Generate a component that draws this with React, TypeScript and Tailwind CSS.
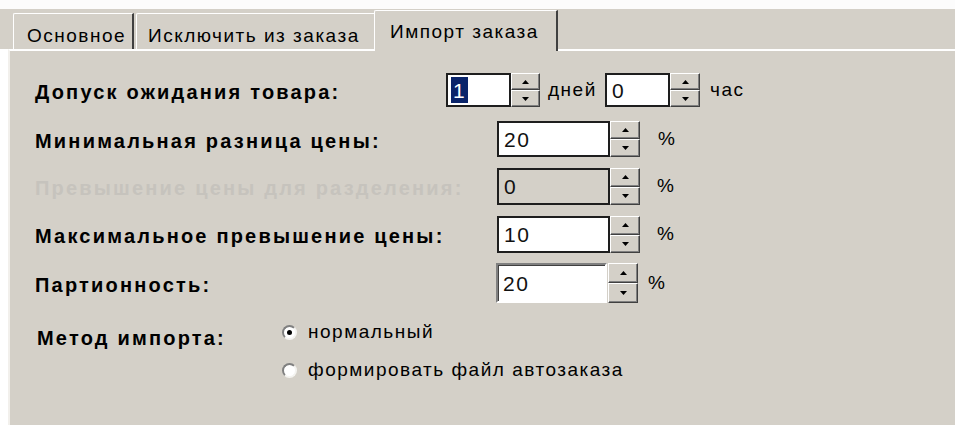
import React from "react";

const face = "font-['Liberation_Sans',Arial,sans-serif]";

// small up/down arrow drawn in the spin buttons
const Arrow: React.FC<{ up?: boolean }> = ({ up }) => (
  <svg width="7" height="4" viewBox="0 0 7 4" className="block">
    {up ? <path d="M3.5 0 L7 4 L0 4 Z" fill="#000" /> : <path d="M0 0 L7 0 L3.5 4 Z" fill="#000" />}
  </svg>
);

const SpinButton: React.FC<{ up?: boolean }> = ({ up }) => (
  <div className="flex-1 flex items-center justify-center bg-[#d4d0c8] border border-t-white border-l-white border-r-[#404040] border-b-[#404040] shadow-[inset_-1px_-1px_0_#808080]">
    <Arrow up={up} />
  </div>
);

const Spinner: React.FC<{ className?: string }> = ({ className = "" }) => (
  <div className={`flex flex-col h-full ${className}`}>
    <SpinButton up />
    <SpinButton />
  </div>
);

type FieldProps = {
  value: string;
  width: string;
  disabled?: boolean;
  selected?: boolean;
  sunken?: boolean;
};

const Field: React.FC<FieldProps> = ({ value, width, disabled, selected, sunken }) => {
  const frame = sunken
    ? "border-2 border-t-[#808080] border-l-[#808080] border-r-white border-b-white shadow-[inset_1px_1px_0_#404040]"
    : "border-2 border-[#1e1e1e]";
  return (
    <div
      className={`${width} h-full flex items-center pl-[3px] ${frame} ${disabled ? "bg-[#d4d0c8]" : "bg-white"}`}
    >
      {selected ? (
        <span className="bg-[#0a246a] text-white h-[26px] px-[2px] flex items-center text-[21px] leading-none">
          {value}
        </span>
      ) : (
        <span className="text-[21px] leading-none text-[#111] pl-[2px]">{value}</span>
      )}
    </div>
  );
};

const Label: React.FC<{ text: string; width: string; disabled?: boolean }> = ({ text, width, disabled }) => (
  <div
    className={`${width} shrink-0 pt-[3px] text-[20px] font-bold tracking-[2.2px] ${
      disabled ? "text-[#c6c3bd]" : "text-black"
    }`}
  >
    {text}
  </div>
);

const Radio: React.FC<{ checked?: boolean; text: string }> = ({ checked, text }) => (
  <div className="flex items-center h-[20px]">
    <div className="w-[15px] h-[15px] shrink-0 rounded-full bg-white border-2 border-t-[#808080] border-l-[#808080] border-r-[#f4f3f0] border-b-[#f4f3f0] flex items-center justify-center">
      {checked && <div className="w-[5px] h-[5px] rounded-full bg-black" />}
    </div>
    <span className="ml-[11px] text-[19px] tracking-[1.5px] text-black">{text}</span>
  </div>
);

export default function App() {
  return (
    <div className={`w-[955px] h-[425px] bg-white flex flex-col overflow-hidden ${face}`}>
      <div className="h-[9px] shrink-0 bg-[#fcfcfc]" />

      {/* tab strip */}
      <div className="h-[40px] shrink-0 bg-[#d4d0c8] flex items-end pl-[13px] text-[19px] tracking-[1.5px] text-black">
        <div className="w-[121px] h-[36px] flex pl-[13px] pt-[8px] border-l border-t border-white rounded-tl-[2px] border-r-2 border-r-[#404040]">
          Основное
        </div>
        <div className="ml-[2px] w-[242px] h-[36px] pl-[11px] pt-[8px] border-l border-t border-white rounded-tl-[2px]">
          Исключить из заказа
        </div>
        <div className="relative z-10 -ml-[4px] -mb-[2px] w-[184px] h-[41px] bg-[#d4d0c8] pl-[15px] pt-[7px] border-l border-t border-white rounded-tl-[2px] border-r-2 border-r-[#404040]">
          Импорт заказа
        </div>
      </div>

      {/* page of the active tab */}
      <div className="flex-1 flex bg-white">
        <div className="ml-[8px] flex-1 bg-[#d4d0c8] border-l-2 border-t-2 border-l-[#f2f0ec] border-t-white pl-[25px] text-[19px] tracking-[1.5px]">
          <div className="flex items-center h-[34px] mt-[22px]">
            <Label text="Допуск ожидания товара:" width="w-[411px]" />
            <Field value="1" width="w-[65px]" selected />
            <Spinner className="w-[29px]" />
            <span className="ml-[8px] w-[49px]">дней</span>
            <div className="ml-[8px] h-full flex">
              <Field value="0" width="w-[65px]" />
              <Spinner className="w-[30px]" />
            </div>
            <span className="ml-[10px]">час</span>
          </div>

          <div className="flex items-center h-[36px] mt-[14px]">
            <Label text="Минимальная разница цены:" width="w-[462px]" />
            <Field value="20" width="w-[113px]" />
            <Spinner className="w-[30px]" />
            <span className="ml-[18px]">%</span>
          </div>

          <div className="flex items-center h-[37px] mt-[11px]">
            <Label text="Превышение цены для разделения:" width="w-[462px]" disabled />
            <Field value="0" width="w-[113px]" disabled />
            <Spinner className="w-[30px]" />
            <span className="ml-[17px]">%</span>
          </div>

          <div className="flex items-center h-[37px] mt-[11px]">
            <Label text="Максимальное превышение цены:" width="w-[462px]" />
            <Field value="10" width="w-[113px]" />
            <Spinner className="w-[30px]" />
            <span className="ml-[17px]">%</span>
          </div>

          <div className="flex items-center h-[40px] mt-[10px]">
            <Label text="Партионность:" width="w-[461px]" />
            <Field value="20" width="w-[111px]" sunken />
            <Spinner className="w-[30px] ml-[1px]" />
            <span className="ml-[10px]">%</span>
          </div>

          <div className="flex mt-[19px]">
            <div className="w-[247px] pl-[2px] pt-[1px] text-[20px] font-bold tracking-[2.2px]">Метод импорта:</div>
            <div className="flex flex-col gap-[18px]">
              <Radio checked text="нормальный" />
              <Radio text="формировать файл автозаказа" />
            </div>
          </div>
        </div>
      </div>
    </div>
  );
}
